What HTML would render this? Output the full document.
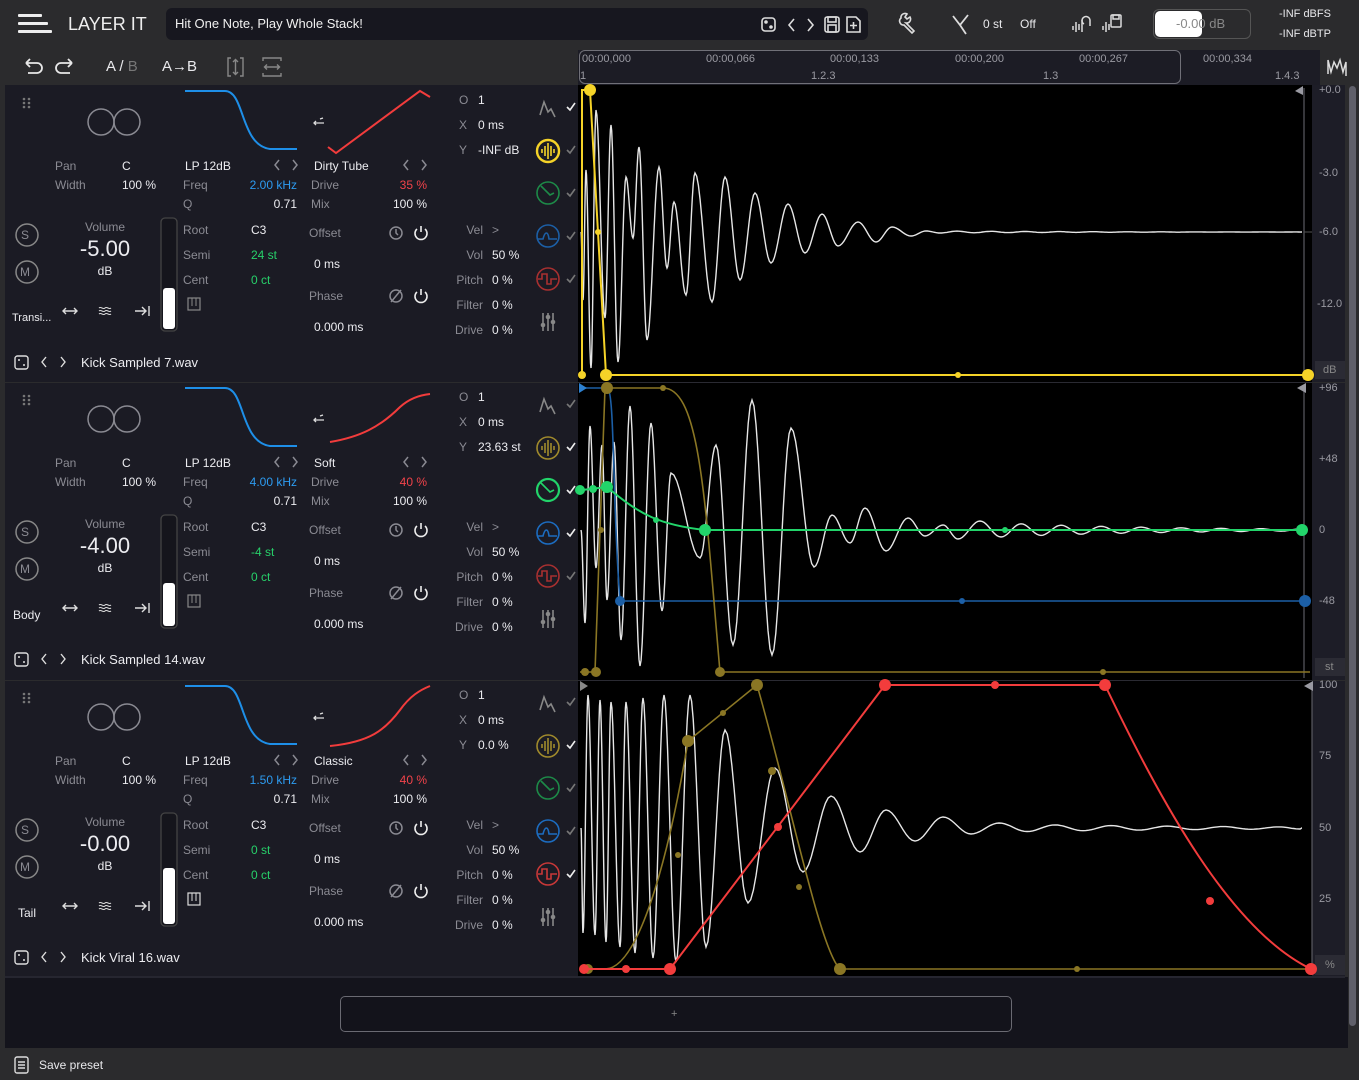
<!DOCTYPE html>
<html><head><meta charset="utf-8">
<style>
*{margin:0;padding:0;box-sizing:border-box}
body{width:1359px;height:1080px;background:#2b2b2d;font-family:"Liberation Sans",sans-serif;color:#e9e9ec;position:relative;overflow:hidden;font-size:12px}
.a{position:absolute;white-space:nowrap;line-height:16px}
.g{color:#8b8b93}
.w{color:#ececf0}
.bl{color:#2d9bf0}
.rd{color:#f2434a}
.gr{color:#27d06a}
.r{text-align:right}
.layer{position:absolute;left:5px;width:573px;height:297px;background:#1b1b24}
.sc{position:absolute;left:1312px;width:33px;background:#1d1d27}
</style></head><body>

<!-- top bar -->
<div class="a" style="left:18px;top:14px;width:34px;height:20px">
<div style="position:absolute;left:0;top:0;width:24px;height:3px;background:#eee;border-radius:1px"></div>
<div style="position:absolute;left:0;top:8px;width:30px;height:3px;background:#eee;border-radius:1px"></div>
<div style="position:absolute;left:0;top:16px;width:34px;height:3px;background:#eee;border-radius:1px"></div>
</div>
<div class="a" style="left:68px;top:13px;font-size:18px;line-height:22px;color:#eee">LAYER IT</div>
<div class="a" style="left:166px;top:8px;width:702px;height:32px;background:#17171f;border-radius:6px"></div>
<div class="a" style="left:175px;top:16px;font-size:13px;color:#f0f0f0">Hit One Note, Play Whole Stack!</div>
<svg class="a" style="left:755px;top:12px" width="112" height="26" viewBox="0 0 112 26" fill="none" stroke="#ddd" stroke-width="1.6">
<rect x="7" y="6" width="13" height="13" rx="3"/><circle cx="11" cy="10" r="1" fill="#ddd"/><circle cx="16" cy="15" r="1" fill="#ddd"/>
<path d="M39 7l-5 6 5 6"/><path d="M53 7l5 6-5 6"/>
<rect x="70" y="5" width="14" height="15" rx="2"/><rect x="73" y="5" width="8" height="5"/><rect x="73" y="13" width="8" height="7"/>
<path d="M92 5h9l4 4v11h-13z"/><path d="M98.5 10v7M95 13.5h7"/>
</svg>
<svg class="a" style="left:895px;top:10px" width="28" height="28" viewBox="0 0 28 28" fill="none" stroke="#ddd" stroke-width="1.6"><path d="M6 8a4 4 0 0 1 6-4l-2 3 2 2 3-2a4 4 0 0 1-4 6l8 8-2 2-8-8a4 4 0 0 1-3-7z"/></svg>
<svg class="a" style="left:948px;top:10px" width="26" height="28" viewBox="0 0 26 28" fill="none" stroke="#ddd" stroke-width="1.8"><path d="M5 6l7 9 8-10M12 15l6 9"/></svg>
<div class="a" style="left:983px;top:16px;font-size:12px">0 st</div>
<div class="a" style="left:1020px;top:16px;font-size:12px">Off</div>
<svg class="a" style="left:1070px;top:10px" width="60" height="26" viewBox="0 0 60 26" fill="none" stroke="#ddd" stroke-width="1.5">
<path d="M3 16v4M6 12v10M9 14v6M12 10v12"/><path d="M14 14a4 4 0 1 1 6-4v6"/>
<path d="M33 16v4M36 12v10M39 14v6"/><rect x="41" y="5" width="10" height="12" rx="1"/><rect x="43" y="5" width="6" height="4"/>
</svg>
<div class="a" style="left:1153px;top:9px;width:98px;height:30px;border:1px solid #555;border-radius:6px;overflow:hidden">
<div style="position:absolute;left:1px;top:1px;width:47px;height:26px;background:#fff;border-radius:5px"></div>
<div style="position:absolute;left:22px;top:6px;font-size:13px;color:#888">-0.00 dB</div></div>
<div class="a" style="left:1279px;top:6px;font-size:11px">-INF dBFS</div>
<div class="a" style="left:1279px;top:26px;font-size:11px">-INF dBTP</div>

<!-- row 2 -->
<svg class="a" style="left:18px;top:54px" width="300" height="26" viewBox="0 0 300 26" fill="none" stroke="#e8e8e8" stroke-width="1.8">
<path d="M8 9h11a5 5 0 0 1 0 10h-9M8 9l4-4M8 9l4 4"/>
<path d="M54 9H43a5 5 0 0 0 0 10h9M54 9l-4-4M54 9l-4 4"/>
<g stroke="#888" stroke-width="1.4"><path d="M213 4h-3v18h3M222 4h3v18h-3M217.5 6v14M215 8l2.5-2.5 2.5 2.5M215 18l2.5 2.5 2.5-2.5"/>
<path d="M245 7v-3h18v3M245 19v3h18v-3M247 13h14M249 10.5l-2.5 2.5 2.5 2.5M259 10.5l2.5 2.5-2.5 2.5"/></g>
</svg>
<div class="a" style="left:106px;top:58px;font-size:15px;line-height:18px">A / <span style="color:#777">B</span></div>
<div class="a" style="left:162px;top:58px;font-size:15px;line-height:18px">A→B</div>

<!-- timeline -->
<div class="a" style="left:578px;top:50px;width:742px;height:35px;background:#1c1c25"></div>
<div class="a" style="left:579px;top:50px;width:602px;height:34px;border:1px solid #707078;border-radius:6px"></div>
<div class="a g" style="left:582px;top:51px;font-size:11px;color:#9a9aa2">00:00,000</div>
<div class="a g" style="left:706px;top:51px;font-size:11px;color:#9a9aa2">00:00,066</div>
<div class="a g" style="left:830px;top:51px;font-size:11px;color:#9a9aa2">00:00,133</div>
<div class="a g" style="left:955px;top:51px;font-size:11px;color:#9a9aa2">00:00,200</div>
<div class="a g" style="left:1079px;top:51px;font-size:11px;color:#9a9aa2">00:00,267</div>
<div class="a g" style="left:1203px;top:51px;font-size:11px;color:#9a9aa2">00:00,334</div>
<div class="a g" style="left:580px;top:68px;font-size:11px;color:#9a9aa2">1</div>
<div class="a g" style="left:811px;top:68px;font-size:11px;color:#9a9aa2">1.2.3</div>
<div class="a g" style="left:1043px;top:68px;font-size:11px;color:#9a9aa2">1.3</div>
<div class="a g" style="left:1275px;top:68px;font-size:11px;color:#9a9aa2">1.4.3</div>
<div class="a" style="left:1320px;top:50px;width:39px;height:35px;background:#2b2b2d"></div>
<svg class="a" style="left:1326px;top:56px" width="24" height="20" viewBox="0 0 24 20" fill="none" stroke="#ddd" stroke-width="1.5"><path d="M2 18V4l3 12 3-10 3 6 3-8 3 12 3-10v14"/></svg>

<!-- layers backgrounds -->
<div class="layer" style="top:85px"></div>
<div class="layer" style="top:383px"></div>
<div class="layer" style="top:681px"></div>
<div class="a" style="left:5px;top:977px;width:1343px;height:71px;background:#14141c"></div>
<div class="a" style="left:5px;top:976px;width:1340px;height:2px;background:#262630"></div>
<div class="a" style="left:340px;top:996px;width:672px;height:36px;border:1px solid #6a6a72;border-radius:5px;background:#13131b"></div>
<div class="a" style="left:671px;top:1006px;color:#888;font-size:11px">+</div>
<svg class="a" style="left:13px;top:1056px" width="18" height="18" viewBox="0 0 18 18" fill="none" stroke="#ddd" stroke-width="1.4"><rect x="2" y="1" width="13" height="16" rx="2"/><path d="M5 6h7M5 9h7M5 12h7"/></svg>
<div class="a" style="left:39px;top:1057px;font-size:12px">Save preset</div>
<div class="a" style="left:1349px;top:86px;width:7px;height:940px;background:#60606a;border-radius:4px"></div>

<!-- scale columns -->
<div class="sc" style="top:85px;height:297px"></div>
<div class="sc" style="top:383px;height:297px"></div>
<div class="sc" style="top:681px;height:295px"></div>
<div class="a g" style="left:1319px;top:82px;font-size:11px;color:#9a9aa2">+0.0</div>
<div class="a g" style="left:1319px;top:165px;font-size:11px;color:#9a9aa2">-3.0</div>
<div class="a g" style="left:1319px;top:224px;font-size:11px;color:#9a9aa2">-6.0</div>
<div class="a g" style="left:1317px;top:296px;font-size:11px;color:#9a9aa2">-12.0</div>
<div class="a" style="left:1315px;top:361px;width:30px;height:18px;background:#2b2b34"></div>
<div class="a g" style="left:1323px;top:362px;font-size:11px;color:#888">dB</div>
<div class="a g" style="left:1319px;top:380px;font-size:11px;color:#9a9aa2">+96</div>
<div class="a g" style="left:1319px;top:451px;font-size:11px;color:#9a9aa2">+48</div>
<div class="a g" style="left:1319px;top:522px;font-size:11px;color:#9a9aa2">0</div>
<div class="a g" style="left:1319px;top:593px;font-size:11px;color:#9a9aa2">-48</div>
<div class="a" style="left:1315px;top:658px;width:30px;height:18px;background:#2b2b34"></div>
<div class="a g" style="left:1325px;top:659px;font-size:11px;color:#888">st</div>
<div class="a g" style="left:1319px;top:677px;font-size:11px;color:#9a9aa2">100</div>
<div class="a g" style="left:1319px;top:748px;font-size:11px;color:#9a9aa2">75</div>
<div class="a g" style="left:1319px;top:820px;font-size:11px;color:#9a9aa2">50</div>
<div class="a g" style="left:1319px;top:891px;font-size:11px;color:#9a9aa2">25</div>
<div class="a" style="left:1315px;top:955px;width:30px;height:20px;background:#2b2b34"></div>
<div class="a g" style="left:1325px;top:957px;font-size:11px;color:#888">%</div>

<!-- graph svg -->
<svg class="a" style="left:0;top:0" width="1359" height="1080" viewBox="0 0 1359 1080" fill="none">
<rect x="578" y="85" width="734" height="297" fill="#000"/>
<rect x="578" y="383" width="734" height="297" fill="#000"/>
<rect x="578" y="681" width="734" height="295" fill="#000"/>
<g stroke="#5a5a62" stroke-width="1.2"><path d="M1304 88V380M1304 386V678M1312 684V975"/></g>
<g fill="#9a9aa2"><path d="M1303 86l-8 5 8 4z"/><path d="M1306 383l-9 5 9 5z"/><path d="M1313 681l-9 5 9 5z"/></g>
<rect x="578" y="382" width="734" height="1" fill="#2a2a32"/><rect x="578" y="680" width="734" height="1" fill="#2a2a32"/>
<path d="M1304 232H1312" stroke="#555"/>
<path id="w1" stroke="#e6e6e6" stroke-width="1.4"/>
<path id="w2" stroke="#e6e6e6" stroke-width="1.4"/>
<path id="w3" stroke="#e6e6e6" stroke-width="1.4"/>
<!-- L1 -->
<g stroke="#f5d328" stroke-width="2"><path d="M582 90V375M581 90H590L606 375H1308"/></g>
<g fill="#f5d328"><circle cx="590" cy="90" r="6"/><circle cx="606" cy="375" r="6"/><circle cx="582" cy="375" r="4"/><circle cx="958" cy="375" r="3"/><circle cx="1308" cy="375" r="6"/><circle cx="598" cy="232" r="3"/></g>
<!-- L2 -->
<g stroke="#1c5fa6" stroke-width="1.6"><path d="M584 388H607C615 388 612 500 620 601H1305"/></g>
<g fill="#1c5fa6"><circle cx="620" cy="601" r="5"/><circle cx="962" cy="601" r="3"/><circle cx="1305" cy="601" r="6"/><path d="M579 383l8 5-8 5z" fill="#2d80d0"/></g>
<g stroke="#8a7624" stroke-width="1.6"><path d="M580 672H595L605 388H663C700 388 705 500 720 672H1310"/></g>
<g fill="#8a7624"><circle cx="596" cy="672" r="5"/><circle cx="585" cy="672" r="4"/><circle cx="607" cy="388" r="6"/><circle cx="663" cy="388" r="3"/><circle cx="720" cy="672" r="5"/><circle cx="1103" cy="672" r="3"/><circle cx="601" cy="530" r="3"/></g>
<g stroke="#22d46a" stroke-width="2"><path d="M582 490L607 487C640 515 660 525 705 530H1302"/></g>
<g fill="#22d46a"><circle cx="607" cy="487" r="6"/><circle cx="705" cy="530" r="6"/><circle cx="1302" cy="530" r="6"/><circle cx="593" cy="489" r="4"/><circle cx="656" cy="520" r="3"/><circle cx="1005" cy="530" r="3"/><circle cx="580" cy="490" r="5"/></g>
<!-- L3 -->
<g stroke="#8a7624" stroke-width="1.6"><path d="M581 969H605C640 969 670 850 688 741L757 685C790 800 820 950 840 969H1310"/></g>
<g fill="#8a7624"><circle cx="588" cy="969" r="5"/><circle cx="688" cy="741" r="6"/><circle cx="723" cy="713" r="3"/><circle cx="757" cy="685" r="6"/><circle cx="678" cy="855" r="3"/><circle cx="772" cy="771" r="4"/><circle cx="799" cy="887" r="3"/><circle cx="840" cy="969" r="6"/><circle cx="1077" cy="969" r="3"/></g>
<g stroke="#f23c3c" stroke-width="2"><path d="M581 969H670L885 685H1105C1160 800 1230 930 1311 969"/></g>
<g fill="#f23c3c"><circle cx="584" cy="969" r="5"/><circle cx="626" cy="969" r="4"/><circle cx="670" cy="969" r="6"/><circle cx="885" cy="685" r="6"/><circle cx="995" cy="685" r="4"/><circle cx="1105" cy="685" r="6"/><circle cx="1311" cy="969" r="6"/><circle cx="778" cy="827" r="4"/><circle cx="1210" cy="901" r="4"/></g>
<path d="M580 681l8 5-8 5z" fill="#888"/>
</svg>

<!-- L1 top 85 -->
<div class="a" style="left:0;top:85px;width:578px;height:297px">
<svg class="a" style="left:0;top:0" width="578" height="297" viewBox="0 0 578 297" fill="none">
<g fill="#777"><circle cx="24" cy="14" r="1.3"/><circle cx="29" cy="14" r="1.3"/><circle cx="24" cy="18" r="1.3"/><circle cx="29" cy="18" r="1.3"/><circle cx="24" cy="22" r="1.3"/><circle cx="29" cy="22" r="1.3"/></g>
<g stroke="#8a8a92" stroke-width="1.5"><circle cx="101" cy="37" r="13"/><circle cx="127" cy="37" r="13"/></g>
<path d="M185 6H225C245 6 240 60 270 64H297" stroke="#1e8fe8" stroke-width="2"/>
<path d="M328 62L336 68L420 6L430 12" stroke="#f23c3c" stroke-width="2"/>
<path d="M314 38h10M316 36l-2 2 2 2M320 34l3-1" stroke="#ddd" stroke-width="1.3"/>
<g stroke="#888" stroke-width="1.5"><circle cx="27" cy="150" r="11"/><circle cx="27" cy="187" r="11"/></g>
<rect x="161" y="133" width="16" height="113" rx="4" stroke="#444" stroke-width="1.3" fill="#15151c"/>
<rect x="163" y="203" width="12" height="41" rx="3" fill="#fff"/>
<g stroke="#ddd" stroke-width="1.4"><path d="M63 226h14M66 223l-3 3 3 3M74 223l3 3-3 3"/><path d="M99 223c2-2 4 2 6 0s4 2 6 0M99 226c2-2 4 2 6 0s4 2 6 0M99 229c2-2 4 2 6 0s4 2 6 0" stroke-width="1"/><path d="M135 226h10M142 222l4 4-4 4M149 221v10"/></g>
<rect x="188" y="213" width="12" height="12" stroke="#888" stroke-width="1.2"/><path d="M192 213v8M196 213v8" stroke="#888"/>
<g stroke="#8a8a92" stroke-width="1.5"><path d="M279 75l-4 5 4 5M293 75l4 5-4 5M408 75l-4 5 4 5M422 75l4 5-4 5"/>
<circle cx="396" cy="148" r="6"/><path d="M396 144v4l2 2"/><circle cx="396" cy="211" r="6"/><path d="M391 217l10-12"/></g>
<g stroke="#eee" stroke-width="1.6"><path d="M417 144a6 6 0 1 0 8 0M421 141v6M417 207a6 6 0 1 0 8 0M421 204v6"/></g>
<g stroke-width="1.6">
<path d="M540 30l4-13 4 10 3-3 4 8" stroke="#888"/>
<circle cx="548" cy="66" r="11" stroke="#f5d328" stroke-width="2.4"/><path d="M542 64v4M545 61v10M548 58v16M551 61v10M554 64v4" stroke="#f5d328"/>
<circle cx="548" cy="108" r="11" stroke="#1d8a48"/><path d="M541 101l9 9 4-2" stroke="#1d8a48"/>
<circle cx="548" cy="151" r="11" stroke="#1c5fa6"/><path d="M538 154h5c2-8 5-8 6 0h8" stroke="#1c5fa6"/>
<circle cx="548" cy="194" r="11" stroke="#a83030"/><path d="M538 194h4v-5h5v10h4v-5h6" stroke="#a83030"/>
<path d="M543 228v18M548 228v18M553 228v18" stroke="#888"/><g fill="#888"><circle cx="543" cy="240" r="2.3"/><circle cx="548" cy="232" r="2.3"/><circle cx="553" cy="237" r="2.3"/></g>
<path d="M567 22l3 3 5-7" stroke="#eee"/><path d="M567 65l3 3 5-7M567 108l3 3 5-7M567 151l3 3 5-7M567 194l3 3 5-7" stroke="#777"/>
</g>
<g stroke="#ddd" stroke-width="1.4"><rect x="15" y="271" width="13" height="13" rx="2.5"/><path d="M46 272l-4 5 4 5M61 272l4 5-4 5"/></g>
<g fill="#ddd"><circle cx="19" cy="275" r="1"/><circle cx="24" cy="280" r="1"/></g>
</svg>
<div class="a g" style="left:55px;top:73px">Pan</div><div class="a w" style="left:122px;top:73px">C</div>
<div class="a g" style="left:55px;top:92px">Width</div><div class="a w" style="left:122px;top:92px">100 %</div>
<div class="a w" style="left:185px;top:73px">LP 12dB</div>
<div class="a g" style="left:183px;top:92px">Freq</div><div class="a bl r" style="left:220px;width:77px;top:92px">2.00 kHz</div>
<div class="a g" style="left:183px;top:111px">Q</div><div class="a w r" style="left:220px;width:77px;top:111px">0.71</div>
<div class="a w" style="left:314px;top:73px">Dirty Tube</div>
<div class="a g" style="left:311px;top:92px">Drive</div><div class="a rd r" style="left:350px;width:77px;top:92px">35 %</div>
<div class="a g" style="left:311px;top:111px">Mix</div><div class="a w r" style="left:350px;width:77px;top:111px">100 %</div>
<div class="a g" style="left:459px;top:7px">O</div><div class="a w" style="left:478px;top:7px">1</div>
<div class="a g" style="left:459px;top:32px">X</div><div class="a w" style="left:478px;top:32px">0 ms</div>
<div class="a g" style="left:459px;top:57px">Y</div><div class="a w" style="left:478px;top:57px">-INF dB</div>
<div class="a g" style="left:85px;top:134px">Volume</div>
<div class="a w" style="left:60px;top:150px;width:90px;text-align:center;font-size:22px;line-height:28px">-5.00</div>
<div class="a w" style="left:60px;top:178px;width:90px;text-align:center">dB</div>
<div class="a g" style="left:21px;top:142px;font-size:12px">S</div><div class="a g" style="left:20px;top:179px">M</div>
<div class="a g" style="left:183px;top:137px">Root</div><div class="a w" style="left:251px;top:137px">C3</div>
<div class="a g" style="left:183px;top:162px">Semi</div><div class="a gr" style="left:251px;top:162px">24 st</div>
<div class="a g" style="left:183px;top:187px">Cent</div><div class="a gr" style="left:251px;top:187px">0 ct</div>
<div class="a g" style="left:309px;top:140px">Offset</div><div class="a w" style="left:314px;top:171px">0 ms</div>
<div class="a g" style="left:309px;top:203px">Phase</div><div class="a w" style="left:314px;top:234px">0.000 ms</div>
<div class="a g r" style="left:440px;width:43px;top:137px">Vel</div><div class="a g" style="left:492px;top:137px">&gt;</div>
<div class="a g r" style="left:440px;width:43px;top:162px">Vol</div><div class="a w" style="left:492px;top:162px">50 %</div>
<div class="a g r" style="left:440px;width:43px;top:187px">Pitch</div><div class="a w" style="left:492px;top:187px">0 %</div>
<div class="a g r" style="left:440px;width:43px;top:212px">Filter</div><div class="a w" style="left:492px;top:212px">0 %</div>
<div class="a g r" style="left:440px;width:43px;top:237px">Drive</div><div class="a w" style="left:492px;top:237px">0 %</div>
<div class="a w" style="left:12px;top:225px;font-size:11px">Transi...</div>
<div class="a w" style="left:81px;top:270px;font-size:13px">Kick Sampled 7.wav</div>
</div>

<!-- L2 top 382 -->
<div class="a" style="left:0;top:382px;width:578px;height:297px">
<svg class="a" style="left:0;top:0" width="578" height="297" viewBox="0 0 578 297" fill="none">
<g fill="#777"><circle cx="24" cy="14" r="1.3"/><circle cx="29" cy="14" r="1.3"/><circle cx="24" cy="18" r="1.3"/><circle cx="29" cy="18" r="1.3"/><circle cx="24" cy="22" r="1.3"/><circle cx="29" cy="22" r="1.3"/></g>
<g stroke="#8a8a92" stroke-width="1.5"><circle cx="101" cy="37" r="13"/><circle cx="127" cy="37" r="13"/></g>
<path d="M185 6H225C245 6 240 60 270 64H297" stroke="#1e8fe8" stroke-width="2"/>
<path d="M330 60C360 55 380 45 400 25C410 16 420 13 430 12" stroke="#f23c3c" stroke-width="2"/>
<path d="M314 38h10M316 36l-2 2 2 2M320 34l3-1" stroke="#ddd" stroke-width="1.3"/>
<g stroke="#888" stroke-width="1.5"><circle cx="27" cy="150" r="11"/><circle cx="27" cy="187" r="11"/></g>
<rect x="161" y="133" width="16" height="113" rx="4" stroke="#444" stroke-width="1.3" fill="#15151c"/>
<rect x="163" y="201" width="12" height="43" rx="3" fill="#fff"/>
<g stroke="#ddd" stroke-width="1.4"><path d="M63 226h14M66 223l-3 3 3 3M74 223l3 3-3 3"/><path d="M99 223c2-2 4 2 6 0s4 2 6 0M99 226c2-2 4 2 6 0s4 2 6 0M99 229c2-2 4 2 6 0s4 2 6 0" stroke-width="1"/><path d="M135 226h10M142 222l4 4-4 4M149 221v10"/></g>
<rect x="188" y="213" width="12" height="12" stroke="#888" stroke-width="1.2"/><path d="M192 213v8M196 213v8" stroke="#888"/>
<g stroke="#8a8a92" stroke-width="1.5"><path d="M279 75l-4 5 4 5M293 75l4 5-4 5M408 75l-4 5 4 5M422 75l4 5-4 5"/>
<circle cx="396" cy="148" r="6"/><path d="M396 144v4l2 2"/><circle cx="396" cy="211" r="6"/><path d="M391 217l10-12"/></g>
<g stroke="#eee" stroke-width="1.6"><path d="M417 144a6 6 0 1 0 8 0M421 141v6M417 207a6 6 0 1 0 8 0M421 204v6"/></g>
<g stroke-width="1.6">
<path d="M540 30l4-13 4 10 3-3 4 8" stroke="#888"/>
<circle cx="548" cy="66" r="11" stroke="#a08a2c"/><path d="M542 64v4M545 61v10M548 58v16M551 61v10M554 64v4" stroke="#a08a2c"/>
<circle cx="548" cy="108" r="11" stroke="#22d46a" stroke-width="2.2"/><path d="M541 101l9 9 4-2" stroke="#22d46a"/>
<circle cx="548" cy="151" r="11" stroke="#1c6cc0"/><path d="M538 154h5c2-8 5-8 6 0h8" stroke="#1c6cc0"/>
<circle cx="548" cy="194" r="11" stroke="#a83030"/><path d="M538 194h4v-5h5v10h4v-5h6" stroke="#a83030"/>
<path d="M543 228v18M548 228v18M553 228v18" stroke="#888"/><g fill="#888"><circle cx="543" cy="240" r="2.3"/><circle cx="548" cy="232" r="2.3"/><circle cx="553" cy="237" r="2.3"/></g>
<path d="M567 65l3 3 5-7M567 108l3 3 5-7M567 151l3 3 5-7" stroke="#eee"/><path d="M567 22l3 3 5-7M567 194l3 3 5-7" stroke="#777"/>
</g>
<g stroke="#ddd" stroke-width="1.4"><rect x="15" y="271" width="13" height="13" rx="2.5"/><path d="M46 272l-4 5 4 5M61 272l4 5-4 5"/></g>
<g fill="#ddd"><circle cx="19" cy="275" r="1"/><circle cx="24" cy="280" r="1"/></g>
</svg>
<div class="a g" style="left:55px;top:73px">Pan</div><div class="a w" style="left:122px;top:73px">C</div>
<div class="a g" style="left:55px;top:92px">Width</div><div class="a w" style="left:122px;top:92px">100 %</div>
<div class="a w" style="left:185px;top:73px">LP 12dB</div>
<div class="a g" style="left:183px;top:92px">Freq</div><div class="a bl r" style="left:220px;width:77px;top:92px">4.00 kHz</div>
<div class="a g" style="left:183px;top:111px">Q</div><div class="a w r" style="left:220px;width:77px;top:111px">0.71</div>
<div class="a w" style="left:314px;top:73px">Soft</div>
<div class="a g" style="left:311px;top:92px">Drive</div><div class="a rd r" style="left:350px;width:77px;top:92px">40 %</div>
<div class="a g" style="left:311px;top:111px">Mix</div><div class="a w r" style="left:350px;width:77px;top:111px">100 %</div>
<div class="a g" style="left:459px;top:7px">O</div><div class="a w" style="left:478px;top:7px">1</div>
<div class="a g" style="left:459px;top:32px">X</div><div class="a w" style="left:478px;top:32px">0 ms</div>
<div class="a g" style="left:459px;top:57px">Y</div><div class="a w" style="left:478px;top:57px">23.63 st</div>
<div class="a g" style="left:85px;top:134px">Volume</div>
<div class="a w" style="left:60px;top:150px;width:90px;text-align:center;font-size:22px;line-height:28px">-4.00</div>
<div class="a w" style="left:60px;top:178px;width:90px;text-align:center">dB</div>
<div class="a g" style="left:21px;top:142px">S</div><div class="a g" style="left:20px;top:179px">M</div>
<div class="a g" style="left:183px;top:137px">Root</div><div class="a w" style="left:251px;top:137px">C3</div>
<div class="a g" style="left:183px;top:162px">Semi</div><div class="a gr" style="left:251px;top:162px">-4 st</div>
<div class="a g" style="left:183px;top:187px">Cent</div><div class="a gr" style="left:251px;top:187px">0 ct</div>
<div class="a g" style="left:309px;top:140px">Offset</div><div class="a w" style="left:314px;top:171px">0 ms</div>
<div class="a g" style="left:309px;top:203px">Phase</div><div class="a w" style="left:314px;top:234px">0.000 ms</div>
<div class="a g r" style="left:440px;width:43px;top:137px">Vel</div><div class="a g" style="left:492px;top:137px">&gt;</div>
<div class="a g r" style="left:440px;width:43px;top:162px">Vol</div><div class="a w" style="left:492px;top:162px">50 %</div>
<div class="a g r" style="left:440px;width:43px;top:187px">Pitch</div><div class="a w" style="left:492px;top:187px">0 %</div>
<div class="a g r" style="left:440px;width:43px;top:212px">Filter</div><div class="a w" style="left:492px;top:212px">0 %</div>
<div class="a g r" style="left:440px;width:43px;top:237px">Drive</div><div class="a w" style="left:492px;top:237px">0 %</div>
<div class="a w" style="left:13px;top:225px;font-size:12px">Body</div>
<div class="a w" style="left:81px;top:270px;font-size:13px">Kick Sampled 14.wav</div>
</div>

<!-- L3 top 680 -->
<div class="a" style="left:0;top:680px;width:578px;height:297px">
<svg class="a" style="left:0;top:0" width="578" height="297" viewBox="0 0 578 297" fill="none">
<g fill="#777"><circle cx="24" cy="14" r="1.3"/><circle cx="29" cy="14" r="1.3"/><circle cx="24" cy="18" r="1.3"/><circle cx="29" cy="18" r="1.3"/><circle cx="24" cy="22" r="1.3"/><circle cx="29" cy="22" r="1.3"/></g>
<g stroke="#8a8a92" stroke-width="1.5"><circle cx="101" cy="37" r="13"/><circle cx="127" cy="37" r="13"/></g>
<path d="M185 6H225C245 6 240 60 270 64H297" stroke="#1e8fe8" stroke-width="2"/>
<path d="M330 66C370 62 385 50 400 30C410 16 420 10 430 6" stroke="#f23c3c" stroke-width="2"/>
<path d="M314 38h10M316 36l-2 2 2 2M320 34l3-1" stroke="#ddd" stroke-width="1.3"/>
<g stroke="#888" stroke-width="1.5"><circle cx="27" cy="150" r="11"/><circle cx="27" cy="187" r="11"/></g>
<rect x="161" y="133" width="16" height="113" rx="4" stroke="#444" stroke-width="1.3" fill="#15151c"/>
<rect x="163" y="188" width="12" height="56" rx="3" fill="#fff"/>
<g stroke="#ddd" stroke-width="1.4"><path d="M63 226h14M66 223l-3 3 3 3M74 223l3 3-3 3"/><path d="M99 223c2-2 4 2 6 0s4 2 6 0M99 226c2-2 4 2 6 0s4 2 6 0M99 229c2-2 4 2 6 0s4 2 6 0" stroke-width="1"/><path d="M135 226h10M142 222l4 4-4 4M149 221v10"/></g>
<rect x="188" y="213" width="12" height="12" stroke="#ddd" stroke-width="1.2"/><path d="M192 213v8M196 213v8" stroke="#ddd"/>
<g stroke="#8a8a92" stroke-width="1.5"><path d="M279 75l-4 5 4 5M293 75l4 5-4 5M408 75l-4 5 4 5M422 75l4 5-4 5"/>
<circle cx="396" cy="148" r="6"/><path d="M396 144v4l2 2"/><circle cx="396" cy="211" r="6"/><path d="M391 217l10-12"/></g>
<g stroke="#eee" stroke-width="1.6"><path d="M417 144a6 6 0 1 0 8 0M421 141v6M417 207a6 6 0 1 0 8 0M421 204v6"/></g>
<g stroke-width="1.6">
<path d="M540 30l4-13 4 10 3-3 4 8" stroke="#888"/>
<circle cx="548" cy="66" r="11" stroke="#a08a2c"/><path d="M542 64v4M545 61v10M548 58v16M551 61v10M554 64v4" stroke="#a08a2c"/>
<circle cx="548" cy="108" r="11" stroke="#1d8a48"/><path d="M541 101l9 9 4-2" stroke="#1d8a48"/>
<circle cx="548" cy="151" r="11" stroke="#1c6cc0"/><path d="M538 154h5c2-8 5-8 6 0h8" stroke="#1c6cc0"/>
<circle cx="548" cy="194" r="11" stroke="#c83838"/><path d="M538 194h4v-5h5v10h4v-5h6" stroke="#c83838"/>
<path d="M543 228v18M548 228v18M553 228v18" stroke="#888"/><g fill="#888"><circle cx="543" cy="240" r="2.3"/><circle cx="548" cy="232" r="2.3"/><circle cx="553" cy="237" r="2.3"/></g>
<path d="M567 65l3 3 5-7M567 194l3 3 5-7" stroke="#eee"/><path d="M567 22l3 3 5-7M567 108l3 3 5-7M567 151l3 3 5-7" stroke="#777"/>
</g>
<g stroke="#ddd" stroke-width="1.4"><rect x="15" y="271" width="13" height="13" rx="2.5"/><path d="M46 272l-4 5 4 5M61 272l4 5-4 5"/></g>
<g fill="#ddd"><circle cx="19" cy="275" r="1"/><circle cx="24" cy="280" r="1"/></g>
</svg>
<div class="a g" style="left:55px;top:73px">Pan</div><div class="a w" style="left:122px;top:73px">C</div>
<div class="a g" style="left:55px;top:92px">Width</div><div class="a w" style="left:122px;top:92px">100 %</div>
<div class="a w" style="left:185px;top:73px">LP 12dB</div>
<div class="a g" style="left:183px;top:92px">Freq</div><div class="a bl r" style="left:220px;width:77px;top:92px">1.50 kHz</div>
<div class="a g" style="left:183px;top:111px">Q</div><div class="a w r" style="left:220px;width:77px;top:111px">0.71</div>
<div class="a w" style="left:314px;top:73px">Classic</div>
<div class="a g" style="left:311px;top:92px">Drive</div><div class="a rd r" style="left:350px;width:77px;top:92px">40 %</div>
<div class="a g" style="left:311px;top:111px">Mix</div><div class="a w r" style="left:350px;width:77px;top:111px">100 %</div>
<div class="a g" style="left:459px;top:7px">O</div><div class="a w" style="left:478px;top:7px">1</div>
<div class="a g" style="left:459px;top:32px">X</div><div class="a w" style="left:478px;top:32px">0 ms</div>
<div class="a g" style="left:459px;top:57px">Y</div><div class="a w" style="left:478px;top:57px">0.0 %</div>
<div class="a g" style="left:85px;top:134px">Volume</div>
<div class="a w" style="left:60px;top:150px;width:90px;text-align:center;font-size:22px;line-height:28px">-0.00</div>
<div class="a w" style="left:60px;top:178px;width:90px;text-align:center">dB</div>
<div class="a g" style="left:21px;top:142px">S</div><div class="a g" style="left:20px;top:179px">M</div>
<div class="a g" style="left:183px;top:137px">Root</div><div class="a w" style="left:251px;top:137px">C3</div>
<div class="a g" style="left:183px;top:162px">Semi</div><div class="a gr" style="left:251px;top:162px">0 st</div>
<div class="a g" style="left:183px;top:187px">Cent</div><div class="a gr" style="left:251px;top:187px">0 ct</div>
<div class="a g" style="left:309px;top:140px">Offset</div><div class="a w" style="left:314px;top:171px">0 ms</div>
<div class="a g" style="left:309px;top:203px">Phase</div><div class="a w" style="left:314px;top:234px">0.000 ms</div>
<div class="a g r" style="left:440px;width:43px;top:137px">Vel</div><div class="a g" style="left:492px;top:137px">&gt;</div>
<div class="a g r" style="left:440px;width:43px;top:162px">Vol</div><div class="a w" style="left:492px;top:162px">50 %</div>
<div class="a g r" style="left:440px;width:43px;top:187px">Pitch</div><div class="a w" style="left:492px;top:187px">0 %</div>
<div class="a g r" style="left:440px;width:43px;top:212px">Filter</div><div class="a w" style="left:492px;top:212px">0 %</div>
<div class="a g r" style="left:440px;width:43px;top:237px">Drive</div><div class="a w" style="left:492px;top:237px">0 %</div>
<div class="a w" style="left:18px;top:225px;font-size:12px">Tail</div>
<div class="a w" style="left:81px;top:270px;font-size:13px">Kick Viral 16.wav</div>
</div>

<script>
function build(id,pts,yc,per,amp0,xEnd){
  var last=pts[pts.length-1],x=last[0],up=last[1]>yc,a=amp0;
  while(x<xEnd){x+=per/2;a*=0.88;pts.push([Math.min(x,xEnd),yc+(up?-a:a)]);up=!up;}
  pts.push([xEnd+2,yc]);
  var d='M'+pts[0][0]+' '+pts[0][1];
  for(var i=1;i<pts.length;i++){var p=pts[i-1],q=pts[i];for(var s=1;s<=10;s++){var t=s/10,x2=p[0]+(q[0]-p[0])*t,y2=p[1]+(q[1]-p[1])*(1-Math.cos(Math.PI*t))/2;d+='L'+x2.toFixed(1)+' '+y2.toFixed(1);}}
  document.getElementById(id).setAttribute('d',d);
}
build('w1',[[581,232],[583,300],[586,170],[591,368],[596,110],[605,318],[611,125],[618,362],[626,177],[633,238],[639,147],[647,340],[659,167],[667,268],[674,202],[686,295],[695,173],[712,302],[725,177],[740,280],[755,193],[771,263],[788,204],[805,253],[822,214],[838,246],[858,222],[876,242],[892,227],[911,236],[926,231],[940,233]],232,34,1,1300);
build('w2',[[581,530],[585,623],[590,426],[596,568],[602,445],[607,600],[614,442],[621,640],[630,406],[640,666],[651,423],[662,611],[671,473],[700,558],[716,445],[733,645],[752,400],[772,655],[791,428],[814,567],[832,515],[850,543],[865,508],[886,551],[908,518],[925,536],[943,525],[958,539],[980,521],[1001,537]],530,40,7,1300);
build('w3',[[581,828],[583,933],[588,695],[595,935],[600,700],[606,942],[611,702],[620,947],[626,702],[635,953],[643,698],[653,958],[664,695],[676,962],[690,695],[706,947],[725,730],[748,903],[775,768],[803,872],[831,796],[860,852],[886,810],[915,841],[943,817],[971,834],[999,823]],828,56,4,1300);
</script>
</body></html>
